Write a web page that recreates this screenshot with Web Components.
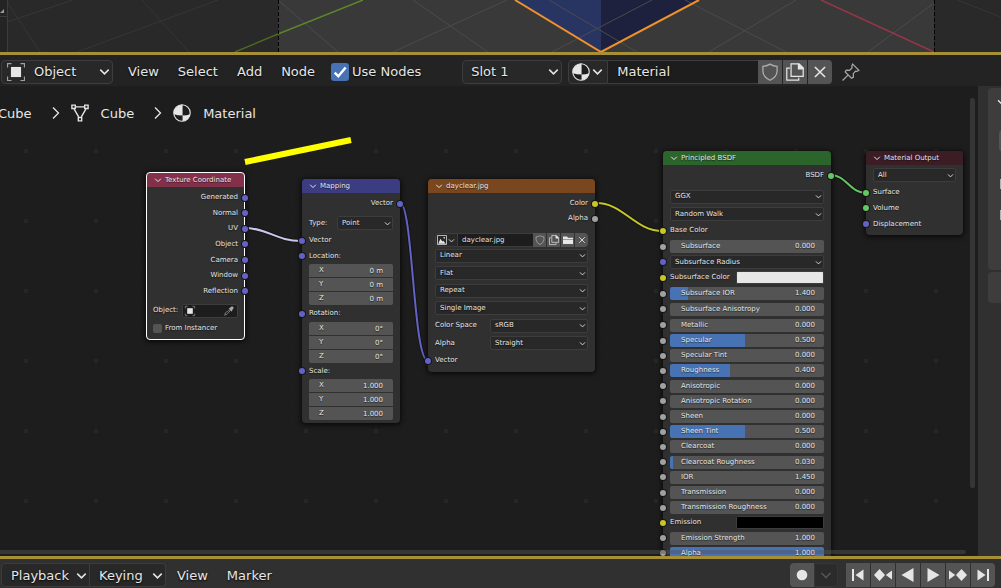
<!DOCTYPE html>
<html lang="en">
<head>
<meta charset="utf-8">
<title>Shader Editor</title>
<style>
html, body {
  height: 100%;
  margin: 0;
}

body {
  background: #1d1d1d;
  color: #e6e6e6;
  font-family: "DejaVu Sans", sans-serif;
  font-size: 13px;
  overflow: hidden;
}
</style>
</head>
<body>
<editor-app></editor-app>

<script>
const icons = {
  chevron: '<path d="M3.5 6L8 10.500 12.500 6" fill="none" stroke="currentColor" stroke-width="1.600"/>',
  next: '<path d="M5 2.500L10.500 8 5 13.500" fill="none" stroke="currentColor" stroke-width="1.300"/>',
  object: '<path d="M.5 4V.5H4M12 .5h3.500V4M15.500 12v3.500H12M4 15.500H.5V12" fill="none" stroke="#a0a0a0"/><path d="M3.500 3.500h9v9h-9z" fill="currentColor"/>',
  mesh: '<path d="M4 2.500h8M2.800 4.500l4 7M13.200 4.500l-4 7" fill="none" stroke="currentColor" stroke-width="1.200"/><path d="M.8 1h3v3h-3zM12.200 1h3v3h-3zM6.500 12h3v3h-3z" fill="none" stroke="currentColor" stroke-width="1.200"/>',
  material: '<circle cx="8" cy="8" r="7.300" fill="#1d1d1d" stroke="currentColor"/><path d="M8.500.7A7.300 7.300 0 0 0 .8 9Q4 10.300 8.500 10.300zM8.500 10.300Q12.500 10.300 15.200 9A7.300 7.300 0 0 1 8.500 15.300z" fill="currentColor"/>',
  shield: '<path d="M8 1Q11 3 14.300 3v4.500Q14 12.500 8 15.300Q2 12.500 1.700 7.500V3Q5 3 8 1z" fill="none" stroke="#b0b0b0" stroke-width="1.100"/>',
  copy: '<path d="M3.500 4.500H.7v10.800h10.600V13" fill="none" stroke="currentColor" stroke-width="1.100"/><path d="M4.500.7h7l3.800 3.800v7.300H4.500z" fill="none" stroke="currentColor" stroke-width="1.100"/><path d="M10.500.7h1.500l3.500 3.500v1.500h-5z" fill="currentColor"/>',
  close: '<path d="M3.500 3.500l9 9M12.500 3.500l-9 9" stroke="currentColor" stroke-width="1.400"/>',
  folder: '<path d="M0 2.500h6.500l1.500 2H16v2H0zM0 7h16v7.500H0z" fill="currentColor"/>',
  image: '<path d="M.8.8h14.400v14.400H.8z" fill="none" stroke="currentColor" stroke-width="1.200"/><path d="M2 13.800L5.500 6l3 4.500 1.500-1.500 4 4.800z" fill="currentColor"/><circle cx="11.500" cy="4.500" r="1.300" fill="currentColor"/>',
  pin: '<path d="M9.500 1l5.500 5.500-1.800 1-1.200-.3-2 2.300.2 3-1.700 1L2.800 8l1-1.700 3 .2L9 4.300 8.700 2.500zM5.300 10.800L.5 15.500" fill="none" stroke="#a8a8a8" stroke-width="1.100"/>',
  dropper: '<path d="M10 5.500l1 1-6.500 7-2.500.5-1 1-.5-.5 1-1 .5-2.500z" fill="none" stroke="#a8a8a8"/><path d="M7.500 3.500l1.500-.5L12 .7q3-.5 3.500 2L13 7l-.5 2z" fill="#a8a8a8"/>',
  check: '<path d="M3.300 8.500l3.200 3.300L13 4" fill="none" stroke="#fff" stroke-width="2.200"/>',
  record: '<circle cx="8" cy="8" r="5.300" fill="currentColor"/>',
  first: '<path d="M3 2v12" stroke="currentColor" stroke-width="2"/><path d="M13.500 2.500v11L5.500 8z" fill="currentColor"/>',
  prevkey: '<path d="M4.500 2L10 8l-5.500 6L-1 8zM17 3.500v9L10.800 8z" fill="currentColor"/>',
  reverse: '<path d="M13.500 1v14L1.500 8z" fill="currentColor"/>',
  play: '<path d="M2.500 1v14l12-7z" fill="currentColor"/>',
  nextkey: '<path d="M11.500 2L17 8l-5.500 6L6 8zM-1 3.500v9L5.200 8z" fill="currentColor"/>',
  last: '<path d="M13 2v12" stroke="currentColor" stroke-width="2"/><path d="M2.500 2.500v11l8-5.500z" fill="currentColor"/>'
};

const controlReset = `
  * { box-sizing: border-box; }
  button, input, select {
    font: inherit;
    color: inherit;
    margin: 0;
    padding: 0;
    border: 0;
    border-radius: 0;
    background: none;
    appearance: none;
    min-width: 0;
    outline: none;
    text-shadow: inherit;
  }
`;

// render() gets the element so that templates can read its attributes
function define(name, render) {
  window.customElements.define(name, class extends HTMLElement {
    constructor() {
      super();
      this.attachShadow({ mode: 'open' });
    }

    connectedCallback() {
      const attr = (key, fallback = '') => this.getAttribute(key) ?? fallback;
      this.shadowRoot.innerHTML = `<style>${controlReset}</style>` + render(attr, this);
    }
  });
}

define('ui-icon', attr => `
<style>
:host {
  display: block;
  flex: none;
  width: var(--icon-size, 18px);
  height: var(--icon-size, 18px);
}
svg { display: block; width: 100%; height: 100%; overflow: visible; }
</style>
<svg viewBox="0 0 16 16" aria-hidden="true">${icons[attr('name')]}</svg>
`);

define('ui-select', attr => `
<style>
:host {
  display: flex;
  align-items: center;
}
label { flex: none; width: var(--label-width, auto); }
.box {
  flex: 1;
  min-width: 0;
  height: var(--control-height, 24px);
  display: grid;
  grid-template-columns: auto 1fr auto;
  align-items: center;
  background: #282828;
  border: 1px solid #3d3d3d;
  border-radius: var(--control-radius, 4px);
}
select {
  grid-area: 1 / 1 / 2 / 4;
  width: 100%;
  height: 100%;
  padding-left: var(--text-inset, 8px);
}
.box > ::slotted(ui-icon), .box > ui-icon { pointer-events: none; z-index: 1; }
.box > ::slotted(ui-icon) { grid-area: 1 / 1; margin-left: 5px; }
.arrow { grid-area: 1 / 3; --icon-size: var(--arrow-size, 15px); }
</style>
${attr('label') ? `<label for="field">${attr('label')}</label>` : ''}
<div class="box">
  <select id="field" aria-label="${attr('label') || attr('name')}"><option>${attr('value')}</option></select>
  <slot></slot>
  <ui-icon class="arrow" name="chevron"></ui-icon>
</div>
`);

define('ui-checkbox', attr => `
<style>
:host { display: block; }
label { display: flex; align-items: center; gap: var(--check-gap, 3px); }
span { display: grid; }
span > * { grid-area: 1 / 1; }
input {
  width: var(--check-size, 18px);
  height: var(--check-size, 18px);
  background: #545454;
  border-radius: 2px;
}
input:checked { background: #4772b3; border-radius: 3px; }
ui-icon { --icon-size: var(--check-size, 18px); pointer-events: none; display: none; }
input:checked + ui-icon { display: block; }
</style>
<label><span><input type="checkbox" ${attr('checked', null) !== null ? 'checked' : ''}><ui-icon name="check"></ui-icon></span>${attr('label')}</label>
`);

// row of joined buttons; icons="a b c"
define('button-strip', attr => `
<style>
:host { display: flex; gap: 1px; height: var(--control-height, 24px); }
button {
  display: grid;
  place-items: center;
  width: var(--strip-width, 24px);
  background: #545454;
}
button:first-child { border-radius: var(--strip-left, 4px) 0 0 var(--strip-left, 4px); }
button:last-child { border-radius: 0 4px 4px 0; }
</style>
${attr('icons').split(' ').map(name => `<button aria-label="${name}"><ui-icon name="${name}"></ui-icon></button>`).join('')}
`);

define('data-block', attr => `
<style>
:host {
  display: flex;
  height: var(--control-height, 24px);
  --strip-left: 0;
}
.pick {
  display: flex;
  align-items: center;
  justify-content: center;
  width: var(--pick-width, 40px);
  background: #282828;
  border: 1px solid #3d3d3d;
  border-radius: 4px 0 0 4px;
}
.pick .arrow { --icon-size: var(--arrow-size, 15px); }
input {
  flex: 1;
  width: 0;
  background: #1d1d1d;
  border: solid #3d3d3d;
  border-width: 1px 0;
  padding-left: var(--block-inset, 9px);
}
</style>
<button class="pick" aria-label="Browse"><ui-icon name="${attr('icon')}"></ui-icon><ui-icon class="arrow" name="chevron"></ui-icon></button>
<input type="text" aria-label="Name" value="${attr('value')}">
<button-strip icons="${attr('icons')}"></button-strip>
`);

define('menu-bar', attr => `
<style>
:host { display: flex; gap: 19px; }
</style>
${attr('items').split(',').map(item => `<button>${item}</button>`).join('')}
`);

define('scene-view', () => `
<style>
:host {
  display: flex;
  flex-direction: column;
  flex: none;
}
svg { display: block; width: 100%; height: 52px; }
.edge { height: 3px; background: #a68f35; }
</style>
<svg viewBox="0 0 1001 52" preserveAspectRatio="xMidYMax slice" fill="none">
  <path d="M0 0h1001v52H0z" fill="#292929"/>
  <path d="M278 0h656v52H278z" fill="#393939"/>
  <path d="M515 0h86v52z" fill="#283563"/>
  <path d="M601 0h98l-98 52z" fill="#1d213d"/>
  <path d="M7 22L73 0M7 2l33 50M142 0l47 52M218 0L77 52M957 0l44 17" stroke="#363636"/>
  <path d="M278 0l60 52M413 0l75 52M507 0L393 52M549 0l88 52M652 0L552 52M685 0l101 52M796 0l-87 52M934 3l-66 49" stroke="#4b4b4b"/>
  <path d="M235 52l43-18" stroke="#4b6a20" stroke-width="1.500"/>
  <path d="M278 34l85-34" stroke="#5d852a" stroke-width="1.500"/>
  <path d="M821 0l113 52" stroke="#943746" stroke-width="1.500"/>
  <path d="M515 0l86 52L699 0" stroke="#f0922b" stroke-width="2"/>
  <path d="M278.500 0v52M934.500 0v52" stroke="#000" stroke-dasharray="4 2"/>
  <path d="M0 0h7v52H0z" fill="#242424"/>
  <path d="M7.500 0v52M0 16.500h7" stroke="#3c3c3c"/>
  <path d="M0 13l4-4v4z" fill="#999"/>
</svg>
<div class="edge"></div>
`);

define('editor-header', () => `
<style>
:host {
  display: flex;
  flex: none;
  align-items: center;
  height: 31px;
  padding: 2px 1px 0;
  box-sizing: border-box;
  background: #232323;
  text-shadow: 0 1px 2px #000;
}
.mode { width: 112px; --text-inset: 32px; }
menu-bar { margin: 0 16px 0 15px; }
.slot { width: 100px; margin: 0 6px 0 41px; }
data-block { width: 264px; margin-right: 10px; }
</style>
<ui-select class="mode" name="Shader type" value="Object"><ui-icon name="object"></ui-icon></ui-select>
<menu-bar items="View,Select,Add,Node"></menu-bar>
<ui-checkbox label="Use Nodes" checked></ui-checkbox>
<ui-select class="slot" name="Slot" value="Slot 1"></ui-select>
<data-block icon="material" value="Material" icons="shield copy close"></data-block>
<button aria-label="Pin"><ui-icon name="pin"></ui-icon></button>
`);

define('context-path', () => `
<style>
:host {
  display: flex;
  align-items: center;
  gap: 12px;
  height: 54px;
  margin-left: -2px;
}
.sep { --icon-size: 16px; margin: 0 -5px 0 4px; }
</style>
<span>Cube</span>
<ui-icon class="sep" name="next"></ui-icon>
<ui-icon name="mesh"></ui-icon><span>Cube</span>
<ui-icon class="sep" name="next"></ui-icon>
<ui-icon name="material"></ui-icon><span>Material</span>
`);

define('graph-node', (attr, el) => {
  el.style.left = attr('x') + 'px';
  el.style.top = attr('y') + 'px';
  el.style.width = attr('width') + 'px';
  return `
<style>
:host {
  position: absolute;
  box-sizing: border-box;
  background: #303030;
  border-radius: 4px;
  box-shadow: 0 1px 5px 1px rgba(0, 0, 0, .7);
  font-size: 7px;
  line-height: 9px;
  text-shadow: 0 1px 1px rgba(0, 0, 0, .6);
  --control-height: 14px;
  --control-radius: 2px;
  --text-inset: 4px;
  --arrow-size: 9px;
  --icon-size: 10px;
  --strip-width: 13px;
  --pick-width: 23px;
  --block-inset: 4px;
  --check-size: 9px;
  --check-gap: 3px;
}
:host([selected]) { outline: 1px solid #fff; outline-offset: -1px; }
header {
  display: flex;
  align-items: center;
  gap: 2px;
  height: 14px;
  padding-left: 6px;
  border-radius: 4px 4px 0 0;
  background: ${attr('color')};
}
:host([selected]) header { margin: 1px 1px 0; border-radius: 3px 3px 0 0; }
.body { display: flex; flex-direction: column; padding: 3px 7px; }
</style>
<header><ui-icon name="chevron"></ui-icon>${attr('name')}</header>
<div class="body"><slot></slot></div>
`;
});

// evenly spaced rows over a given height
define('node-rows', (attr, el) => {
  el.style.height = attr('height') + 'px';
  return `
<style>
:host { display: grid; grid-auto-rows: minmax(0, 1fr); align-items: center; }
</style>
<slot></slot>
`;
});

const socketColors = { vector: '#6363c7', color: '#c7c729', value: '#a1a1a1', shader: '#63c763' };

// in / out name the socket type; the dot sits on the node edge
define('node-socket', attr => `
<style>
:host {
  display: grid;
  align-items: center;
  position: relative;
  min-height: 15px;
  text-align: ${attr('out') ? 'right' : 'left'};
}
:host::before {
  content: "";
  position: absolute;
  top: calc(50% - 3px);
  ${attr('out') ? 'right' : 'left'}: -10px;
  width: 6px;
  height: 6px;
  border-radius: 50%;
  background: ${socketColors[attr('in') || attr('out')]};
  box-shadow: 0 0 0 1px #151515;
}
</style>
<slot>${attr('label')}</slot>
`);

define('node-slider', attr => `
<style>
:host {
  display: grid;
  grid-template-columns: 1fr auto;
  align-items: center;
  height: 13px;
}
label { grid-area: 1 / 1; padding-left: 11px; z-index: 1; }
output { grid-area: 1 / 2; padding-right: 9px; z-index: 1; }
label, output { pointer-events: none; }
input {
  grid-area: 1 / 1 / 2 / 3;
  width: 100%;
  height: 100%;
  border-radius: 2px;
  background: linear-gradient(to right, #4772b3 ${attr('fill', '0')}%, #545454 0);
}
input::-webkit-slider-thumb { appearance: none; width: 1px; height: 1px; }
</style>
<label for="field">${attr('label')}</label>
<input id="field" type="range" min="0" max="100" value="${attr('fill', '0')}">
<output for="field">${attr('value')}</output>
`);

define('node-color', attr => `
<style>
:host { display: flex; align-items: center; justify-content: space-between; }
input { width: 88px; height: 13px; border: 1px solid #3d3d3d; border-radius: 2px; background: ${attr('value')}; }
input::-webkit-color-swatch-wrapper { padding: 0; }
input::-webkit-color-swatch { border: 0; border-radius: 1px; }
</style>
<label for="field">${attr('label')}</label>
<input id="field" type="color" value="${attr('value')}">
`);

define('vector-field', attr => `
<style>
:host {
  display: grid;
  grid-auto-rows: minmax(0, 1fr);
  gap: 1px;
  height: 41px;
  border-radius: 2px;
  overflow: hidden;
}
div { display: flex; align-items: center; background: #545454; padding: 0 10px; }
input { flex: 1; width: 0; height: 100%; text-align: right; }
</style>
${['X', 'Y', 'Z'].map(axis => `<div><label for="${axis}">${axis}</label><input id="${axis}" type="text" value="${attr('value')}"></div>`).join('')}
`);

define('object-field', () => `
<style>
:host { display: flex; align-items: center; justify-content: space-between; }
button {
  display: flex;
  align-items: center;
  justify-content: space-between;
  width: 56px;
  height: 14px;
  padding: 0 3px 0 2px;
  background: #1d1d1d;
  border: 1px solid #3d3d3d;
  border-radius: 2px;
}
</style>
<label for="field">Object:</label>
<button id="field"><ui-icon name="object"></ui-icon><ui-icon name="dropper"></ui-icon></button>
`);

const links = [
  ['M244 142C268 142 276 155 301 155', '#cbc6ea'],
  ['M400 117C413 117 413 275 428 275', '#6363c7'],
  ['M596 117C624 117 634 145 663 145', '#c7c729'],
  ['M831 89C846 89 850 107 866 107', '#63c763']
];

define('graph-links', () => `
<style>
:host { position: absolute; inset: 0; }
svg { display: block; width: 100%; height: 100%; overflow: visible; }
</style>
<svg fill="none">
  <path d="M245 76L351 54" stroke="#ffff00" stroke-width="6"/>
  ${links.map(([d, color]) => `<path d="${d}" stroke="#141414" stroke-width="4"/><path d="${d}" stroke="${color}" stroke-width="2"/>`).join('')}
</svg>
`);

const sliders = list => list.map(([label, value, fill]) =>
  `<node-socket in="value"><node-slider label="${label}" value="${value}" fill="${fill || 0}"></node-slider></node-socket>`).join('');

define('node-canvas', () => `
<style>
:host {
  display: block;
  position: relative;
  overflow: hidden;
  background: #1d1d1d;
}
.dots { position: absolute; inset: 0; }
context-path { position: relative; }
.scroll { position: absolute; background: rgba(84, 84, 84, .45); border-radius: 3px; }
.vertical { right: 3px; top: 12px; width: 5px; height: 390px; }
.horizontal { left: -4px; right: 12px; bottom: 2px; height: 4px; }
.object { margin-top: 3px; }
.method { margin-top: 5px; }
.block { margin-top: 7px; }
.type { --label-width: 28px; margin: 5px 0 3px; }
.split { --label-width: 55px; }
.target { margin-bottom: 3px; }
</style>
<svg class="dots" width="100%" height="100%">
  <defs>
    <pattern id="minor" x="11" y="8" width="14" height="14" patternUnits="userSpaceOnUse"><path d="M0 0h2v2H0z" fill="#1f1f1f"/></pattern>
    <pattern id="major" x="24" y="63" width="70" height="70" patternUnits="userSpaceOnUse"><path d="M0 0h4v4H0z" fill="#262626"/></pattern>
  </defs>
  <rect width="100%" height="100%" fill="url(#minor)"/>
  <rect width="100%" height="100%" fill="url(#major)"/>
</svg>
<context-path></context-path>
<graph-links></graph-links>

<graph-node name="Texture Coordinate" color="#83314a" x="146" y="86" width="99" selected>
  <node-rows height="109">
    ${['Generated', 'Normal', 'UV', 'Object', 'Camera', 'Window', 'Reflection'].map(label => `<node-socket out="vector" label="${label}"></node-socket>`).join('')}
  </node-rows>
  <node-rows class="object" height="35">
    <object-field></object-field>
    <ui-checkbox label="From Instancer"></ui-checkbox>
  </node-rows>
</graph-node>

<graph-node name="Mapping" color="#3c3c83" x="302" y="93" width="98">
  <node-socket out="vector" label="Vector"></node-socket>
  <ui-select class="type" label="Type:" value="Point"></ui-select>
  <node-rows height="31">
    <node-socket in="vector" label="Vector"></node-socket>
    <node-socket in="vector" label="Location:"></node-socket>
  </node-rows>
  <vector-field value="0 m"></vector-field>
  <node-rows height="17"><node-socket in="vector" label="Rotation:"></node-socket></node-rows>
  <vector-field value="0°"></vector-field>
  <node-rows height="16"><node-socket in="vector" label="Scale:"></node-socket></node-rows>
  <vector-field value="1.000"></vector-field>
</graph-node>

<graph-node name="dayclear.jpg" color="#79461d" x="428" y="93" width="167">
  <node-socket out="color" label="Color"></node-socket>
  <node-socket out="value" label="Alpha"></node-socket>
  <data-block class="block" icon="image" value="dayclear.jpg" icons="shield copy folder close"></data-block>
  <node-rows height="105">
    <ui-select name="Interpolation" value="Linear"></ui-select>
    <ui-select name="Projection" value="Flat"></ui-select>
    <ui-select name="Extension" value="Repeat"></ui-select>
    <ui-select name="Source" value="Single Image"></ui-select>
    <ui-select class="split" label="Color Space" value="sRGB"></ui-select>
    <ui-select class="split" label="Alpha" value="Straight"></ui-select>
  </node-rows>
  <node-rows height="17"><node-socket in="vector" label="Vector"></node-socket></node-rows>
</graph-node>

<graph-node name="Principled BSDF" color="#2b652b" x="663" y="65" width="168">
  <node-socket out="shader" label="BSDF"></node-socket>
  <node-rows class="method" height="35">
    <ui-select name="Distribution" value="GGX"></ui-select>
    <ui-select name="Subsurface method" value="Random Walk"></ui-select>
  </node-rows>
  <node-rows height="110">
    <node-socket in="color" label="Base Color"></node-socket>
    ${sliders([['Subsurface', '0.000']])}
    <node-socket in="vector"><ui-select name="Radius" value="Subsurface Radius"></ui-select></node-socket>
    <node-socket in="color"><node-color label="Subsurface Color" value="#e7e7e7"></node-color></node-socket>
    ${sliders([['Subsurface IOR', '1.400', 12], ['Subsurface Anisotropy', '0.000'], ['Metallic', '0.000']])}
  </node-rows>
  <node-rows height="228">
    ${sliders([
      ['Specular', '0.500', 49],
      ['Specular Tint', '0.000'],
      ['Roughness', '0.400', 39],
      ['Anisotropic', '0.000'],
      ['Anisotropic Rotation', '0.000'],
      ['Sheen', '0.000'],
      ['Sheen Tint', '0.500', 49],
      ['Clearcoat', '0.000'],
      ['Clearcoat Roughness', '0.030', 2],
      ['IOR', '1.450'],
      ['Transmission', '0.000'],
      ['Transmission Roughness', '0.000']
    ])}
    <node-socket in="color"><node-color label="Emission" value="#000000"></node-color></node-socket>
    ${sliders([['Emission Strength', '1.000'], ['Alpha', '1.000', 100]])}
  </node-rows>
</graph-node>

<graph-node name="Material Output" color="#3c1d26" x="866" y="65" width="97">
  <ui-select class="target" name="Target" value="All"></ui-select>
  <node-rows height="47">
    <node-socket in="shader" label="Surface"></node-socket>
    <node-socket in="shader" label="Volume"></node-socket>
    <node-socket in="vector" label="Displacement"></node-socket>
  </node-rows>
</graph-node>

<div class="scroll vertical"></div>
<div class="scroll horizontal"></div>
`);

define('side-panel', () => `
<style>
:host { display: flex; flex-direction: column; gap: 2px; padding: 2px 0 0 10px; background: #303030; overflow: hidden; }
section { background: #3d3d3d; border-radius: 4px 0 0 4px; height: 31px; }
.open { height: 182px; padding: 7px 0 0 7px; }
.open ui-icon { --icon-size: 14px; }
.field { width: 20px; height: 22px; margin: 21px 0 0 4px; background: #545454; border-radius: 4px; }
.tick { width: 1px; height: 10px; margin: 27px 0 0 5px; background: #b0b0b0; }
.tick + .tick { margin-top: 21px; }
</style>
<section class="open">
  <ui-icon name="chevron"></ui-icon>
  <div class="field"></div>
  <div class="tick"></div>
  <div class="tick"></div>
</section>
<section></section>
`);

define('timeline-bar', () => `
<style>
:host {
  display: flex;
  flex: none;
  height: 32px;
  box-sizing: border-box;
  padding: 4px 6px 0 1px;
  background: #303030;
  border-top: 3px solid #a68f35;
  text-shadow: 0 1px 2px #000;
  --icon-size: 16px;
}
.menus { display: flex; }
.menus button {
  display: flex;
  align-items: center;
  justify-content: space-between;
  height: 24px;
  padding: 0 0 0 9px;
  background: #282828;
  border: 1px solid #3d3d3d;
}
.menus ui-icon { --icon-size: 15px; }
.playback { width: 89px; border-radius: 4px 0 0 4px; }
.keying { width: 76px; border-radius: 0 4px 4px 0; }
.menus .keying { border-left: 0; }
menu-bar { margin-left: 11px; height: 24px; }
.record { display: flex; margin: 0 8px 0 auto; }
.record button { display: grid; place-items: center; width: 24px; height: 24px; background: #545454; border-radius: 4px 0 0 4px; }
.record .options { background: #2b2b2b; border: 1px solid #363636; color: #555; border-radius: 0 4px 4px 0; }
</style>
<div class="menus">
  <button class="playback">Playback<ui-icon name="chevron"></ui-icon></button>
  <button class="keying">Keying<ui-icon name="chevron"></ui-icon></button>
</div>
<menu-bar items="View,Marker"></menu-bar>
<div class="record">
  <button aria-label="Auto keying"><ui-icon name="record"></ui-icon></button>
  <button class="options" aria-label="Auto keying options"><ui-icon name="chevron"></ui-icon></button>
</div>
<button-strip icons="first prevkey reverse play nextkey last"></button-strip>
`);

define('editor-app', () => `
<style>
:host { display: flex; flex-direction: column; height: 100vh; }
main { flex: 1; min-height: 0; display: grid; grid-template-columns: 1fr 23px; grid-template-rows: minmax(0, 1fr); }
</style>
<scene-view></scene-view>
<editor-header></editor-header>
<main>
  <node-canvas></node-canvas>
  <side-panel></side-panel>
</main>
<timeline-bar></timeline-bar>
`);
</script>
</body>
</html>
